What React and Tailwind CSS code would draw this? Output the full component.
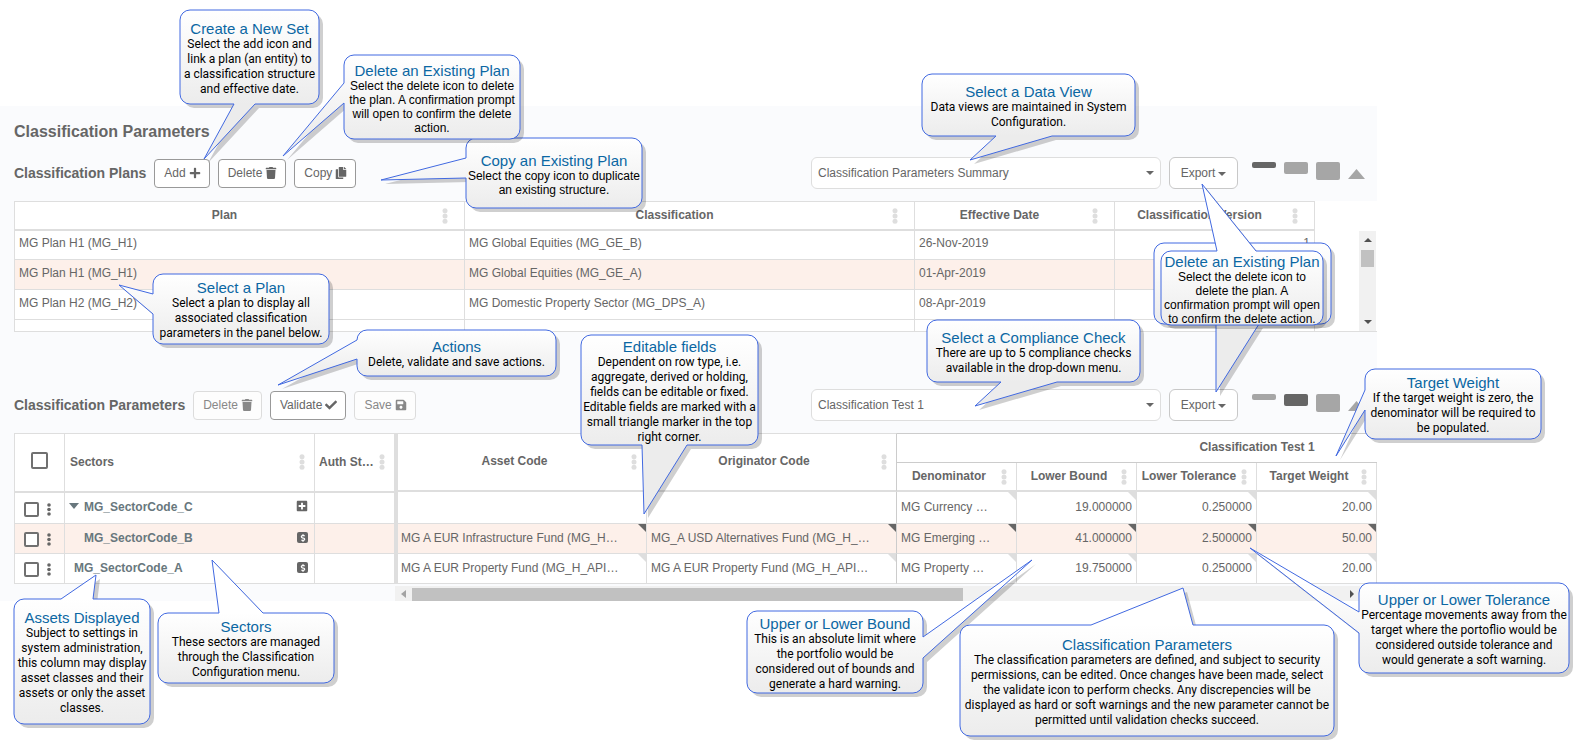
import React from "react";
import { FaPlus, FaTrash, FaCopy, FaCheck, FaSave, FaPlusSquare, FaDollarSign } from "react-icons/fa";

/* ---------- small drawings ---------- */

function Dots({ className = "" }) {
  return (
    <svg width="6" height="16" viewBox="0 0 6 16" className={`shrink-0 ${className}`} aria-hidden="true">
      <circle cx="3" cy="2.7" r="2.5" fill="#dedede" />
      <circle cx="3" cy="8" r="2.5" fill="#dedede" />
      <circle cx="3" cy="13.3" r="2.5" fill="#dedede" />
    </svg>
  );
}

function Kebab() {
  return (
    <svg width="4" height="13" viewBox="0 0 4 13" aria-hidden="true">
      <circle cx="2" cy="2" r="1.8" fill="#666" />
      <circle cx="2" cy="6.5" r="1.8" fill="#666" />
      <circle cx="2" cy="11" r="1.8" fill="#666" />
    </svg>
  );
}

function Caret() {
  return (
    <svg width="8" height="4" viewBox="0 0 8 4" aria-hidden="true">
      <path d="M0 0h8L4 4z" fill="#666" />
    </svg>
  );
}

function DollarBadge() {
  return (
    <span className="flex h-[11px] w-[11px] items-center justify-center rounded-xs bg-[#666] text-white">
      <FaDollarSign size={8} />
    </span>
  );
}

/* ---------- controls ---------- */

function ToolButton({ children, icon, disabled }) {
  return (
    <button
      type="button"
      disabled={disabled}
      className={
        disabled
          ? "flex h-[29px] items-center gap-[3px] rounded border border-[#dcdcdc] bg-[#fdfdfd] pr-2 pb-0.5 pl-[9px] text-xs text-[#888]"
          : "flex h-[29px] items-center gap-[3px] rounded border border-[#999] bg-white pr-2 pb-0.5 pl-[9px] text-xs text-[#666]"
      }
    >
      {children}
      {icon}
    </button>
  );
}

function ViewControls({ label, options, active }) {
  const on = "bg-[#666]";
  const off = "bg-[#a6a6a6]";
  return (
    <div className="ml-auto flex items-start pr-3">
      <div className="relative">
        <select
          aria-label={label}
          className="h-8 w-[350px] appearance-none rounded-md border border-[#dedede] bg-white px-1.5 text-xs text-[#666]"
        >
          {options.map((o) => (
            <option key={o}>{o}</option>
          ))}
        </select>
        <span className="pointer-events-none absolute top-3.5 right-[7px]">
          <Caret />
        </span>
      </div>
      <button
        type="button"
        className="ml-2 flex h-8 w-[69px] items-center justify-center gap-[3px] rounded-md border border-[#c8c8c8] bg-white text-xs text-[#666]"
      >
        Export
        <span className="pt-0.5"><Caret /></span>
      </button>
      <div className="ml-3.5 flex items-start gap-2 pt-[5px]">
        <button type="button" aria-label="Small panel" className={`h-1.5 w-6 rounded-xs ${active === 0 ? on : off}`} />
        <button type="button" aria-label="Medium panel" className={`h-3 w-6 rounded-xs ${active === 1 ? on : off}`} />
        <button type="button" aria-label="Large panel" className={`h-[18px] w-6 rounded-xs ${active === 2 ? on : off}`} />
        <button type="button" aria-label="Collapse panel" className="pt-[7px]">
          <svg width="17" height="10" viewBox="0 0 17 10" aria-hidden="true">
            <path d="M0 10L8.5 0L17 10z" fill="#a6a6a6" />
          </svg>
        </button>
      </div>
    </div>
  );
}

/* ---------- plans grid ---------- */

const PLANS = [
  ["MG Plan H1 (MG_H1)", "MG Global Equities (MG_GE_B)", "26-Nov-2019", "1"],
  ["MG Plan H1 (MG_H1)", "MG Global Equities (MG_GE_A)", "01-Apr-2019", ""],
  ["MG Plan H2 (MG_H2)", "MG Domestic Property Sector (MG_DPS_A)", "08-Apr-2019", ""],
];

function PlansTable() {
  return (
    <div className="mt-3 ml-3.5 flex h-[131px] overflow-hidden border-b border-[#dedede] bg-white">
      <table className="w-full table-fixed border-separate border-spacing-0 border-l border-[#dedede] text-xs">
        <colgroup>
          <col />
          <col className="w-[450px]" />
          <col className="w-[200px]" />
          <col className="w-[200px]" />
        </colgroup>
        <thead>
          <tr className="h-[30px]">
            {["Plan", "Classification", "Effective Date", "Classification Version"].map((h) => (
              <th key={h} className="border-t border-r border-b-2 border-[#dedede] p-0 font-bold">
                <div className="flex items-center">
                  <span className="flex-1 pb-0.5 text-center whitespace-nowrap">{h}</span>
                  <span className="w-[30px] pl-2"><Dots /></span>
                </div>
              </th>
            ))}
          </tr>
        </thead>
        <tbody>
          {PLANS.map((row, r) => (
            <tr key={r} className={r === 0 ? "h-[29px]" : r === 1 ? "h-[30px] bg-[#fdf0ea]" : "h-[30px]"}>
              {row.map((c, i) => (
                <td
                  key={i}
                  className={`border-r border-b border-[#dedede] px-1 pt-0 pb-1 leading-4 whitespace-nowrap ${i === 3 ? "text-right" : ""}`}
                >
                  {c}
                </td>
              ))}
            </tr>
          ))}
          <tr className="h-[30px]">
            <td className="border-r border-[#dedede]" />
            <td className="border-r border-[#dedede]" />
            <td className="border-r border-[#dedede]" />
            <td className="border-r border-[#dedede]" />
          </tr>
        </tbody>
      </table>
      <div className="flex w-[62px] shrink-0 justify-end pt-[30px] pr-px">
        <div className="flex w-[17px] flex-col items-center bg-[#f1f1f1] py-[7px]">
          <svg width="8" height="4" viewBox="0 0 8 4" aria-hidden="true"><path d="M0 4L4 0L8 4z" fill="#505050" /></svg>
          <div className="mt-2 h-[17px] w-[13px] bg-[#c1c1c1]" />
          <svg className="mt-auto" width="8" height="4" viewBox="0 0 8 4" aria-hidden="true"><path d="M0 0h8L4 4z" fill="#505050" /></svg>
        </div>
      </div>
    </div>
  );
}

/* ---------- parameters grid ---------- */

const SECTORS = [
  { name: "MG_SectorCode_C", pad: "pl-1", caret: true, badge: "plus", h: "h-[31px]" },
  { name: "MG_SectorCode_B", pad: "pl-[19px]", badge: "dollar", h: "h-[30px] bg-[#fdf0ea]" },
  { name: "MG_SectorCode_A", pad: "pl-[9px]", badge: "dollar", h: "h-[30px]" },
];

function SectorsTable() {
  return (
    <table className="w-[380px] shrink-0 table-fixed border-separate border-spacing-0 border-l border-[#dedede] bg-white text-xs">
      <colgroup>
        <col className="w-[50px]" />
        <col className="w-[250px]" />
        <col />
      </colgroup>
      <thead>
        <tr className="h-[60px]">
          <th className="border-t border-r border-b-2 border-[#dedede] p-0 pb-1">
            <div className="flex justify-center">
              <input
                type="checkbox"
                aria-label="Select all sectors"
                className="h-[17px] w-[17px] appearance-none rounded-xs border-2 border-[#707070] bg-white"
              />
            </div>
          </th>
          <th className="border-t border-r border-b-2 border-[#dedede] p-0">
            <div className="flex items-center justify-between pr-[9px] pb-0.5 pl-[5px]">
              Sectors
              <Dots />
            </div>
          </th>
          <th className="border-t border-b-2 border-[#dedede] p-0">
            <div className="flex items-center justify-between pr-[9px] pb-0.5 pl-1 whitespace-nowrap">
              Auth St…
              <Dots />
            </div>
          </th>
        </tr>
      </thead>
      <tbody>
        {SECTORS.map((s) => (
          <tr key={s.name} className={s.h}>
            <td className="border-r border-b border-[#dedede] p-0">
              <div className="flex items-center gap-2 pt-0.5 pl-[9px]">
                <input
                  type="checkbox"
                  aria-label={`Select ${s.name}`}
                  className="h-[15px] w-[15px] appearance-none rounded-xs border-2 border-[#707070] bg-white"
                />
                <Kebab />
              </div>
            </td>
            <td className="border-r border-b border-[#dedede] p-0">
              <div className={`flex items-center pr-1 pb-0.5 leading-4 font-bold text-[#68777d] ${s.pad}`}>
                {s.caret && (
                  <svg className="mr-[5px] mb-0.5" width="10" height="6" viewBox="0 0 10 6" aria-hidden="true">
                    <path d="M0 0h10L5 6z" fill="#68777d" />
                  </svg>
                )}
                {s.name}
                <span className="mr-0.5 ml-auto text-[#666]">
                  {s.badge === "plus" ? <FaPlusSquare size={12} className="mb-0.5" /> : <DollarBadge />}
                </span>
              </div>
            </td>
            <td className="border-b border-[#dedede] p-0" />
          </tr>
        ))}
      </tbody>
    </table>
  );
}

const HOLDINGS = [
  ["", "", "MG Currency …", "19.000000", "0.250000", "20.00"],
  ["MG A EUR Infrastructure Fund (MG_H…", "MG_A USD Alternatives Fund (MG_H_…", "MG Emerging …", "41.000000", "2.500000", "50.00"],
  ["MG A EUR Property Fund (MG_H_API…", "MG A EUR Property Fund (MG_H_API…", "MG Property …", "19.750000", "0.250000", "20.00"],
];

function HeaderLabel({ children }) {
  return (
    <div className="flex items-center whitespace-nowrap">
      <span className="flex-1 pb-0.5 text-center">{children}</span>
      <span className="w-[15px]"><Dots /></span>
    </div>
  );
}

function HoldingsTable() {
  return (
    <table className="w-full table-fixed border-separate border-spacing-0 bg-white text-xs">
      <colgroup>
        <col />
        <col className="w-[250px]" />
        <col className="w-[120px]" />
        <col className="w-[120px]" />
        <col className="w-[120px]" />
        <col className="w-[120px]" />
      </colgroup>
      <thead>
        <tr className="h-[30px]">
          <th rowSpan={2} className="border-t border-r border-b-2 border-[#dedede] p-0">
            <HeaderLabel>Asset Code</HeaderLabel>
          </th>
          <th rowSpan={2} className="border-t border-r border-b-2 border-[#dedede] border-r-[#ccc] p-0">
            <HeaderLabel>Originator Code</HeaderLabel>
          </th>
          <th colSpan={4} className="border-t border-b border-[#ccc] p-0 pb-0.5 pl-[240px] text-center">
            Classification Test 1
          </th>
        </tr>
        <tr className="h-[29px]">
          {["Denominator", "Lower Bound", "Lower Tolerance", "Target Weight"].map((h) => (
            <th key={h} className="border-r border-b-2 border-[#dedede] p-0">
              <HeaderLabel>{h}</HeaderLabel>
            </th>
          ))}
        </tr>
      </thead>
      <tbody>
        {HOLDINGS.map((row, r) => (
          <tr key={r} className={r === 0 ? "h-8" : r === 1 ? "h-[30px] bg-[#fdf0ea]" : "h-[30px]"}>
            {row.map((c, i) => (
              <td
                key={i}
                className={`relative border-r border-b border-[#dedede] pt-0 pb-0.5 leading-4 whitespace-nowrap ${i === 1 ? "border-r-[#ccc]" : ""} ${i === 0 ? "pl-[3px]" : "pl-1"} ${i > 2 ? "pr-1 text-right" : "pr-0"}`}
              >
                {c}
                {c && (
                  <svg className="absolute top-0 right-0" width="8" height="8" viewBox="0 0 8 8" aria-hidden="true">
                    <path d="M0 0h8v8z" fill={r === 1 ? "#666" : "#dedede"} />
                  </svg>
                )}
              </td>
            ))}
          </tr>
        ))}
      </tbody>
    </table>
  );
}

/* ---------- callouts ---------- */

function balloonPath(w, h, side, a, b, [tx, ty]) {
  const r = 10;
  const arc = (x, y) => `A${r} ${r} 0 0 1 ${x} ${y}`;
  const tail = {
    top: `L${a} 0L${tx} ${ty}L${b} 0`,
    right: `L${w} ${a}L${tx} ${ty}L${w} ${b}`,
    bottom: `L${b} ${h}L${tx} ${ty}L${a} ${h}`,
    left: `L0 ${b}L${tx} ${ty}L0 ${a}`,
  };
  const t = (s) => (s === side ? tail[s] : "");
  return (
    `M${r} 0${t("top")}L${w - r} 0${arc(w, r)}${t("right")}L${w} ${h - r}${arc(w - r, h)}` +
    `${t("bottom")}L${r} ${h}${arc(0, h - r)}${t("left")}L0 ${r}${arc(r, 0)}Z`
  );
}

function Callout({ id, box, size, side, from, to, tip, title, lines, tight }) {
  const [w, h] = size;
  const d = balloonPath(w, h, side, from, to, tip);
  return (
    <aside className={`absolute ${box}`}>
      <svg className="absolute inset-0 h-full w-full overflow-visible" aria-hidden="true">
        <defs>
          <linearGradient id={id} gradientUnits="userSpaceOnUse" x1="0" y1="0" x2="0" y2={h}>
            <stop offset="0" stopColor="#fff" />
            <stop offset="1" stopColor="#ececec" />
          </linearGradient>
        </defs>
        <path d={d} transform="translate(4 4)" fill="#000" fillOpacity="0.19" />
        <path d={d} fill={`url(#${id})`} stroke="#4169e1" strokeWidth="1" />
      </svg>
      <div className="relative flex h-full flex-col items-center justify-center pt-0.5 text-center whitespace-nowrap">
        {title && <h3 className="text-[15px] leading-[17px] text-[#0b67a3]">{title}</h3>}
        <p
          className={
            tight
              ? "text-xs leading-[14px] text-black"
              : "font-['Roboto','Open_Sans',sans-serif] text-xs leading-[15px] text-black"
          }
        >
          {lines.map((l, i) => (
            <React.Fragment key={i}>
              {i > 0 && <br />}
              {l}
            </React.Fragment>
          ))}
        </p>
      </div>
    </aside>
  );
}

const CALLOUTS = [
  { id: "c-create", box: "left-[180px] top-[10px] w-[139px] h-[94px]", size: [139, 94], side: "bottom", from: 54, to: 75, tip: [24, 149], title: "Create a New Set", lines: ["Select the add icon and", "link a plan (an entity) to", "a classification structure", "and effective date."] },
  { id: "c-copy", box: "left-[466px] top-[138px] w-[176px] h-[70px]", size: [176, 70], side: "left", from: 20, to: 40, tip: [-85, 42], title: "Copy an Existing Plan", lines: ["Select the copy icon to duplicate", "an existing structure."], tight: true },
  { id: "c-delete", box: "left-[344px] top-[55px] w-[176px] h-[84px]", size: [176, 84], side: "left", from: 28, to: 48, tip: [-61, 101], title: "Delete an Existing Plan", lines: ["Select the delete icon to delete", "the plan. A confirmation prompt", "will open to confirm the delete", "action."], tight: true },
  { id: "c-view", box: "left-[922px] top-[74px] w-[213px] h-[62px]", size: [213, 62], side: "bottom", from: 74, to: 130, tip: [48, 86], title: "Select a Data View", lines: ["Data views are maintained in System", "Configuration."] },
  { id: "c-back", box: "left-[1154px] top-[243px] w-[177px] h-[81px]", size: [177, 81], side: "bottom", from: 62, to: 105, tip: [62, 149], lines: ["", "confirmation prompt will open"] },
  { id: "c-front", box: "left-[1161px] top-[251px] w-[162px] h-[74px]", size: [162, 74], side: "top", from: 56, to: 95, tip: [41, -67], title: "Delete an Existing Plan", lines: ["Select the delete icon to", "delete the plan. A", "confirmation prompt will open", "to confirm the delete action."], tight: true },
  { id: "c-plan", box: "left-[153px] top-[274px] w-[176px] h-[70px]", size: [176, 70], side: "left", from: 20, to: 40, tip: [-34, 11], title: "Select a Plan", lines: ["Select a plan to display all", "associated classification", "parameters in the panel below."] },
  { id: "c-actions", box: "left-[357px] top-[330px] w-[199px] h-[46px]", size: [199, 46], side: "left", from: 10, to: 29, tip: [-79, 55], title: "Actions", lines: ["Delete, validate and save actions."] },
  { id: "c-edit", box: "left-[581px] top-[335px] w-[177px] h-[110px]", size: [177, 110], side: "bottom", from: 61, to: 106, tip: [63, 179], title: "Editable fields", lines: ["Dependent on row type, i.e.", "aggregate, derived or holding,", "fields can be editable or fixed.", "Editable fields are marked with a", "small triangle marker in the top", "right corner."] },
  { id: "c-check", box: "left-[927px] top-[320px] w-[213px] h-[62px]", size: [213, 62], side: "bottom", from: 74, to: 130, tip: [48, 86], title: "Select a Compliance Check", lines: ["There are up to 5 compliance checks", "available in the drop-down menu."] },
  { id: "c-target", box: "left-[1365px] top-[369px] w-[176px] h-[70px]", size: [176, 70], side: "left", from: 21, to: 41, tip: [-29, 87], title: "Target Weight", lines: ["If the target weight is zero, the", "denominator will be required to", "be populated."] },
  { id: "c-assets", box: "left-[14px] top-[599px] w-[136px] h-[125px]", size: [136, 125], side: "top", from: 47, to: 79, tip: [82, -24], title: "Assets Displayed", lines: ["Subject to settings in", "system administration,", "this column may display", "asset classes and their", "assets or only the asset", "classes."] },
  { id: "c-sectors", box: "left-[158px] top-[613px] w-[176px] h-[70px]", size: [176, 70], side: "top", from: 61, to: 105, tip: [54, -53], title: "Sectors", lines: ["These sectors are managed", "through the Classification", "Configuration menu."] },
  { id: "c-bound", box: "left-[747px] top-[611px] w-[176px] h-[82px]", size: [176, 82], side: "right", from: 26, to: 47, tip: [285, -51], title: "Upper or Lower Bound", lines: ["This is an absolute limit where", "the portfolio would be", "considered out of bounds and", "generate a hard warning."] },
  { id: "c-params", box: "left-[960px] top-[625px] w-[374px] h-[111px]", size: [374, 111], side: "top", from: 131, to: 233, tip: [223, -37], title: "Classification Parameters", lines: ["The classification parameters are defined, and subject to security", "permissions, can be edited. Once changes have been made, select", "the validate icon to perform checks. Any discrepencies will be", "displayed as hard or soft warnings and the new parameter cannot be", "permitted until validation checks succeed."] },
  { id: "c-tolerance", box: "left-[1359px] top-[583px] w-[210px] h-[90px]", size: [210, 90], side: "left", from: 29, to: 50, tip: [-109, -35], title: "Upper or Lower Tolerance", lines: ["Percentage movements away from the", "target where the portoflio would be", "considered outside tolerance and", "would generate a soft warning."] },
];

/* ---------- page ---------- */

export default function App() {
  return (
    <div className="relative min-h-screen overflow-x-hidden bg-white pt-[106px] font-['Liberation_Sans',Arial,sans-serif] text-[#666]">
      <main className="mr-[206px] bg-[#fafbfd] pt-4">
        <h1 className="pl-3.5 text-base leading-5 font-bold">Classification Parameters</h1>

        <section aria-label="Classification Plans">
          <div className="mt-[15px] flex h-8 items-start pl-3.5">
            <div className="flex items-center gap-2 pt-0.5">
              <h2 className="pb-0.5 text-sm font-bold whitespace-nowrap">Classification Plans</h2>
              <ToolButton icon={<FaPlus size={12} />}>Add</ToolButton>
              <ToolButton icon={<FaTrash size={12} />}>Delete</ToolButton>
              <ToolButton icon={<FaCopy size={12} />}>Copy</ToolButton>
            </div>
            <ViewControls label="Data view" options={["Classification Parameters Summary"]} active={0} />
          </div>
          <PlansTable />
        </section>

        <section aria-label="Classification Parameters" className="pt-[57px]">
          <div className="flex h-8 items-start pl-3.5">
            <div className="flex items-center gap-2 pt-0.5">
              <h2 className="pb-0.5 text-sm font-bold whitespace-nowrap">Classification Parameters</h2>
              <ToolButton disabled icon={<FaTrash size={12} />}>Delete</ToolButton>
              <ToolButton icon={<FaCheck size={12} />}>Validate</ToolButton>
              <ToolButton disabled icon={<FaSave size={12} />}>Save</ToolButton>
            </div>
            <ViewControls label="Compliance check" options={["Classification Test 1"]} active={1} />
          </div>
          <div className="mt-3 flex items-stretch pl-3.5">
            <SectorsTable />
            <div className="w-1 shrink-0 bg-[#dedede]" />
            <div className="min-w-0 flex-1">
              <HoldingsTable />
            </div>
          </div>
          <div className="mt-0.5 mr-[17px] ml-[395px] flex h-[15px] items-center bg-[#f1f1f1] pr-1.5 pl-1.5">
            <svg width="5" height="8" viewBox="0 0 5 8" aria-hidden="true"><path d="M5 0v8L0 4z" fill="#a3a3a3" /></svg>
            <div className="ml-1.5 h-[13px] w-[551px] self-end bg-[#c1c1c1]" />
            <svg className="ml-auto" width="4" height="8" viewBox="0 0 4 8" aria-hidden="true"><path d="M0 0v8L4 4z" fill="#505050" /></svg>
          </div>
        </section>
      </main>

      {CALLOUTS.map((c) => (
        <Callout key={c.id} {...c} />
      ))}
    </div>
  );
}
